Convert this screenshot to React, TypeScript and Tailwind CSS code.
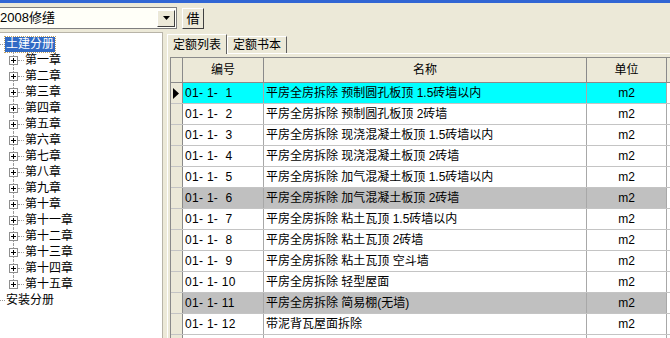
import React from 'react';

const chapters = [
  '第一章', '第二章', '第三章', '第四章', '第五章', '第六章', '第七章', '第八章',
  '第九章', '第十章', '第十一章', '第十二章', '第十三章', '第十四章', '第十五章',
];

type Row = { code: string; name: string; unit: string; bg: string };

const rows: Row[] = [
  { code: '01- 1-  1', name: '平房全房拆除 预制圆孔板顶 1.5砖墙以内', unit: 'm2', bg: 'bg-[#00ffff]' },
  { code: '01- 1-  2', name: '平房全房拆除 预制圆孔板顶 2砖墙', unit: 'm2', bg: 'bg-white' },
  { code: '01- 1-  3', name: '平房全房拆除 现浇混凝土板顶 1.5砖墙以内', unit: 'm2', bg: 'bg-white' },
  { code: '01- 1-  4', name: '平房全房拆除 现浇混凝土板顶 2砖墙', unit: 'm2', bg: 'bg-white' },
  { code: '01- 1-  5', name: '平房全房拆除 加气混凝土板顶 1.5砖墙以内', unit: 'm2', bg: 'bg-white' },
  { code: '01- 1-  6', name: '平房全房拆除 加气混凝土板顶 2砖墙', unit: 'm2', bg: 'bg-[#c0c0c0]' },
  { code: '01- 1-  7', name: '平房全房拆除 粘土瓦顶 1.5砖墙以内', unit: 'm2', bg: 'bg-white' },
  { code: '01- 1-  8', name: '平房全房拆除 粘土瓦顶 2砖墙', unit: 'm2', bg: 'bg-white' },
  { code: '01- 1-  9', name: '平房全房拆除 粘土瓦顶 空斗墙', unit: 'm2', bg: 'bg-white' },
  { code: '01- 1- 10', name: '平房全房拆除 轻型屋面', unit: 'm2', bg: 'bg-white' },
  { code: '01- 1- 11', name: '平房全房拆除 简易棚(无墙)', unit: 'm2', bg: 'bg-[#c0c0c0]' },
  { code: '01- 1- 12', name: '带泥背瓦屋面拆除', unit: 'm2', bg: 'bg-white' },
  { code: '', name: '', unit: '', bg: 'bg-white' },
];

const PlusBox = () => (
  <span className="absolute left-[9px] top-[4px] w-[9px] h-[9px] border border-[#8f8f8f] bg-white z-10">
    <span className="absolute left-[1px] top-[3px] w-[5px] h-px bg-black" />
    <span className="absolute left-[3px] top-[1px] w-px h-[5px] bg-black" />
  </span>
);

const TreeChild = ({ label, last }: { label: string; last: boolean }) => (
  <div className="relative h-[16px] flex items-center">
    <span
      className={`absolute left-[13px] top-0 border-l border-dotted border-[#9a9a9a] ${last ? 'h-[8px]' : 'h-[16px]'}`}
    />
    <span className="absolute left-[18px] top-[8px] w-[6px] border-t border-dotted border-[#9a9a9a]" />
    <PlusBox />
    <span className="pl-[25px] leading-[16px]">{label}</span>
  </div>
);

const Tree = () => (
  <div className="w-[163px] shrink-0 bg-white border-t border-r border-[#b8b4a8] pt-[3px] overflow-hidden">
    <div className="relative h-[16px] flex items-center">
      <span className="absolute left-0 top-[8px] w-[5px] border-t border-dotted border-[#9a9a9a]" />
      <span className="ml-[5px] px-px h-[15px] leading-[15px] bg-[#316ac5] text-white outline outline-dotted outline-[#c0a060]">
        土建分册
      </span>
    </div>
    {chapters.map((c, i) => (
      <TreeChild key={c} label={c} last={i === chapters.length - 1} />
    ))}
    <div className="relative h-[16px] flex items-center">
      <span className="absolute left-0 top-[8px] w-[5px] border-t border-dotted border-[#9a9a9a]" />
      <span className="ml-[6px] leading-[16px]">安装分册</span>
    </div>
  </div>
);

const Grid = () => (
  <div className="flex-1 min-h-0 border-l border-t border-[#8a8a8a] bg-white overflow-hidden">
    <div className="flex h-[25px] bg-[#ece9d8] border-b border-[#8a8a8a]">
      <div className="w-[12px] shrink-0 border-r border-[#8a8a8a]" />
      <div className="w-[81px] shrink-0 border-r border-[#8a8a8a] flex items-center justify-center">编号</div>
      <div className="w-[323px] shrink-0 border-r border-[#8a8a8a] flex items-center justify-center">名称</div>
      <div className="w-[80px] shrink-0 border-r border-[#8a8a8a] flex items-center justify-center">单位</div>
      <div className="flex-1" />
    </div>
    {rows.map((r, i) => (
      <div key={i} className="flex h-[21px] border-b border-[#c4c4c4]">
        <div className="w-[12px] shrink-0 bg-[#ece9d8] border-r border-[#8a8a8a] flex items-center pl-[2px]">
          {i === 0 && (
            <svg width="6" height="11" viewBox="0 0 6 11">
              <polygon points="0,0 6,5.5 0,11" fill="#000" />
            </svg>
          )}
        </div>
        <div className={`w-[81px] shrink-0 border-r border-[#a8a8a8] pl-[2px] flex items-center whitespace-pre tracking-[0.3px] ${r.bg}`}>
          {r.code}
        </div>
        <div className={`w-[323px] shrink-0 border-r border-[#a8a8a8] pl-[2px] flex items-center whitespace-pre ${r.bg}`}>
          {r.name}
        </div>
        <div className={`w-[80px] shrink-0 border-r border-[#a8a8a8] flex items-center justify-center ${r.bg}`}>
          {r.unit}
        </div>
        <div className="flex-1 bg-white" />
      </div>
    ))}
  </div>
);

export default function App() {
  return (
    <div className="w-[670px] h-[338px] overflow-hidden bg-[#ece9d8] flex flex-col text-[12px] text-black font-['Liberation_Sans','Noto_Sans_CJK_SC',sans-serif]">
      <div className="h-[3px] bg-[#3166d4] shrink-0" />
      <div className="h-[29px] shrink-0 flex items-start pt-[4px] gap-[5px]">
        <div className="w-[177px] h-[22px] border border-l-0 border-[#7f7f7f] bg-[#fffff8] flex items-center justify-between">
          <span className="leading-[20px] text-[13px]">2008修缮</span>
          <div className="w-[18px] h-[17px] mr-px bg-[#ece9d8] border border-t-white border-l-white border-r-[#404040] border-b-[#404040] flex items-center justify-center">
            <svg width="7" height="4" viewBox="0 0 7 4">
              <polygon points="0,0 7,0 3.5,4" fill="#000" />
            </svg>
          </div>
        </div>
        <div className="mt-px w-[22px] h-[21px] bg-[#ece9d8] border border-t-white border-l-white border-r-[#404040] border-b-[#404040] flex items-center justify-center text-[13px]">
          借
        </div>
      </div>
      <div className="flex flex-1 min-h-0">
        <Tree />
        <div className="flex-1 min-w-0 flex flex-col">
          <div className="h-[21px] shrink-0 flex items-end pl-[4px]">
            <div className="relative z-10 -mb-px h-[20px] px-[5px] bg-[#ece9d8] border-t border-l border-white border-r border-r-[#606060] flex items-center">
              定额列表
            </div>
            <div className="h-[17px] px-[5px] border-t border-l border-white border-r border-r-[#606060] flex items-center">
              定额书本
            </div>
          </div>
          <div className="flex-1 min-h-0 ml-[4px] border-t border-l border-white pt-[3px] pl-[2px] flex flex-col">
            <Grid />
          </div>
        </div>
      </div>
    </div>
  );
}
